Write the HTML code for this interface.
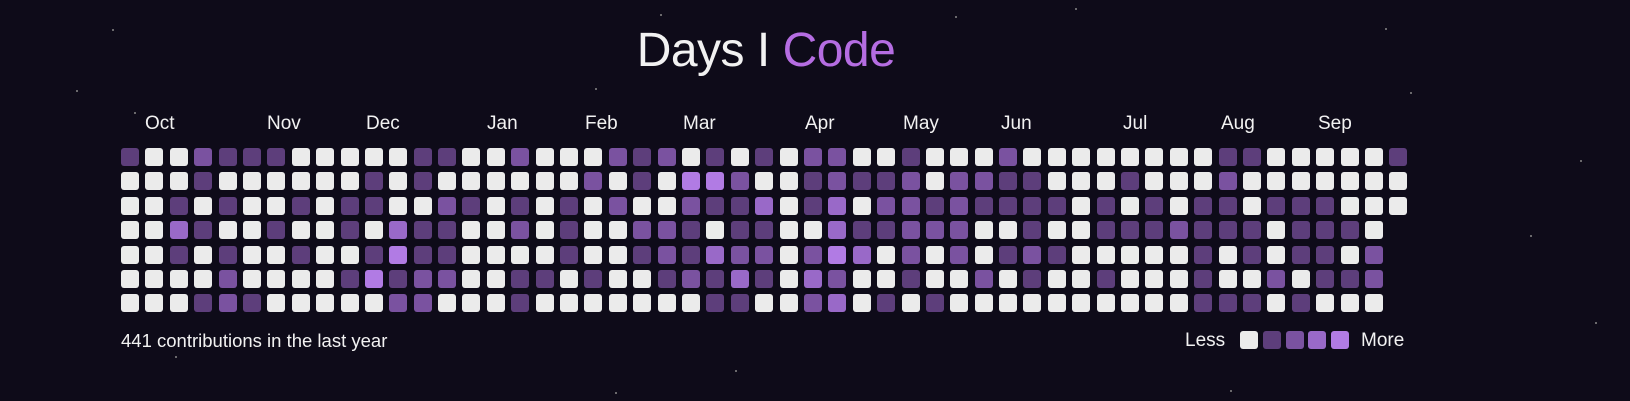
<!DOCTYPE html>
<html><head><meta charset="utf-8"><style>
*{margin:0;padding:0;box-sizing:border-box}
html,body{width:1630px;height:401px;overflow:hidden;background:#0e0b19;font-family:"Liberation Sans",sans-serif;color:#f2f2f2}
.t{position:absolute;top:23px;left:0;width:1532px;text-align:center;font-size:48px;letter-spacing:-0.5px}
.t span{color:#b56de2}
.m{position:absolute;top:113px;font-size:19px}
.g{position:absolute;left:121px;top:148px;display:grid;grid-template-rows:repeat(7,18px);grid-auto-flow:column;grid-auto-columns:18px;gap:6.4px}
.g i,.l i{display:block;width:18px;height:18px;border-radius:3px;background:#ebebeb}
.g i.a,.l i.a{background:#5d3e7b}.g i.b,.l i.b{background:#7a52a0}.g i.c,.l i.c{background:#9969c8}.g i.d,.l i.d{background:#b17be4}
.f{position:absolute;left:121px;top:330px;font-size:18.5px}
.l{position:absolute;left:1240px;top:331px;display:flex;gap:4.8px}
.s{position:absolute;width:2px;height:2px;border-radius:1px;background:#888}
</style></head><body>
<div class="t">Days I <span>Code</span></div>
<div class="m" style="left:145px">Oct</div>
<div class="m" style="left:267px">Nov</div>
<div class="m" style="left:366px">Dec</div>
<div class="m" style="left:487px">Jan</div>
<div class="m" style="left:585px">Feb</div>
<div class="m" style="left:683px">Mar</div>
<div class="m" style="left:805px">Apr</div>
<div class="m" style="left:903px">May</div>
<div class="m" style="left:1001px">Jun</div>
<div class="m" style="left:1123px">Jul</div>
<div class="m" style="left:1221px">Aug</div>
<div class="m" style="left:1318px">Sep</div>
<div class="g">
<i class=a></i><i></i><i></i><i></i><i></i><i></i><i></i>
<i></i><i></i><i></i><i></i><i></i><i></i><i></i>
<i></i><i></i><i class=a></i><i class=c></i><i class=a></i><i></i><i></i>
<i class=b></i><i class=a></i><i></i><i class=a></i><i></i><i></i><i class=a></i>
<i class=a></i><i></i><i class=a></i><i></i><i class=a></i><i class=b></i><i class=b></i>
<i class=a></i><i></i><i></i><i></i><i></i><i></i><i class=a></i>
<i class=a></i><i></i><i></i><i class=a></i><i></i><i></i><i></i>
<i></i><i></i><i class=a></i><i></i><i class=a></i><i></i><i></i>
<i></i><i></i><i></i><i></i><i></i><i></i><i></i>
<i></i><i></i><i class=a></i><i class=a></i><i></i><i class=a></i><i></i>
<i></i><i class=a></i><i class=a></i><i></i><i class=a></i><i class=d></i><i></i>
<i></i><i></i><i></i><i class=c></i><i class=d></i><i class=a></i><i class=b></i>
<i class=a></i><i class=a></i><i></i><i class=a></i><i class=a></i><i class=b></i><i class=b></i>
<i class=a></i><i></i><i class=b></i><i class=a></i><i class=a></i><i class=b></i><i></i>
<i></i><i></i><i class=a></i><i></i><i></i><i></i><i></i>
<i></i><i></i><i></i><i></i><i></i><i></i><i></i>
<i class=b></i><i></i><i class=a></i><i class=b></i><i></i><i class=a></i><i class=a></i>
<i></i><i></i><i></i><i></i><i></i><i class=a></i><i></i>
<i></i><i></i><i class=a></i><i class=a></i><i class=a></i><i></i><i></i>
<i></i><i class=b></i><i></i><i></i><i></i><i class=a></i><i></i>
<i class=b></i><i></i><i class=b></i><i></i><i></i><i></i><i></i>
<i class=a></i><i class=a></i><i></i><i class=b></i><i class=a></i><i></i><i></i>
<i class=b></i><i></i><i></i><i class=b></i><i class=b></i><i class=a></i><i></i>
<i></i><i class=d></i><i class=b></i><i class=a></i><i class=a></i><i class=b></i><i></i>
<i class=a></i><i class=d></i><i class=a></i><i></i><i class=c></i><i class=a></i><i class=a></i>
<i></i><i class=b></i><i class=a></i><i class=a></i><i class=b></i><i class=c></i><i class=a></i>
<i class=a></i><i></i><i class=c></i><i class=a></i><i class=b></i><i class=a></i><i></i>
<i></i><i></i><i></i><i></i><i></i><i></i><i></i>
<i class=b></i><i class=a></i><i class=a></i><i></i><i class=b></i><i class=c></i><i class=b></i>
<i class=b></i><i class=b></i><i class=c></i><i class=c></i><i class=d></i><i class=b></i><i class=c></i>
<i></i><i class=a></i><i></i><i class=a></i><i class=c></i><i></i><i></i>
<i></i><i class=a></i><i class=b></i><i class=a></i><i></i><i></i><i class=a></i>
<i class=a></i><i class=b></i><i class=b></i><i class=b></i><i class=b></i><i class=a></i><i></i>
<i></i><i></i><i class=a></i><i class=b></i><i></i><i></i><i class=a></i>
<i></i><i class=b></i><i class=b></i><i class=b></i><i class=b></i><i></i><i></i>
<i></i><i class=b></i><i class=a></i><i></i><i></i><i class=b></i><i></i>
<i class=b></i><i class=a></i><i class=a></i><i></i><i class=a></i><i></i><i></i>
<i></i><i class=a></i><i class=a></i><i class=a></i><i class=b></i><i class=a></i><i></i>
<i></i><i></i><i class=a></i><i></i><i class=a></i><i></i><i></i>
<i></i><i></i><i></i><i></i><i></i><i></i><i></i>
<i></i><i></i><i class=a></i><i class=a></i><i></i><i class=a></i><i></i>
<i></i><i class=a></i><i></i><i class=a></i><i></i><i></i><i></i>
<i></i><i></i><i class=a></i><i class=a></i><i></i><i></i><i></i>
<i></i><i></i><i></i><i class=b></i><i></i><i></i><i></i>
<i></i><i></i><i class=a></i><i class=a></i><i class=a></i><i class=a></i><i class=a></i>
<i class=a></i><i class=b></i><i class=a></i><i class=a></i><i></i><i></i><i class=a></i>
<i class=a></i><i></i><i></i><i class=a></i><i class=a></i><i></i><i class=a></i>
<i></i><i></i><i class=a></i><i></i><i></i><i class=b></i><i></i>
<i></i><i></i><i class=a></i><i class=a></i><i class=a></i><i></i><i class=a></i>
<i></i><i></i><i class=a></i><i class=a></i><i class=a></i><i class=a></i><i></i>
<i></i><i></i><i></i><i class=a></i><i></i><i class=a></i><i></i>
<i></i><i></i><i></i><i></i><i class=b></i><i class=b></i><i></i>
<i class=a></i><i></i><i></i>
</div>
<div class="f">441 contributions in the last year</div>
<div class="m" style="left:1185px;top:330px">Less</div>
<div class="l"><i></i><i class=a></i><i class=b></i><i class=c></i><i class=d></i></div>
<div class="m" style="left:1361px;top:330px">More</div>
<div class="s" style="left:76px;top:90px"></div>
<div class="s" style="left:112px;top:29px"></div>
<div class="s" style="left:134px;top:112px"></div>
<div class="s" style="left:175px;top:356px"></div>
<div class="s" style="left:595px;top:88px"></div>
<div class="s" style="left:660px;top:14px"></div>
<div class="s" style="left:955px;top:16px"></div>
<div class="s" style="left:1385px;top:28px"></div>
<div class="s" style="left:1410px;top:92px"></div>
<div class="s" style="left:1580px;top:160px"></div>
<div class="s" style="left:1595px;top:322px"></div>
<div class="s" style="left:1075px;top:8px"></div>
<div class="s" style="left:735px;top:370px"></div>
<div class="s" style="left:615px;top:392px"></div>
<div class="s" style="left:1230px;top:390px"></div>
<div class="s" style="left:1530px;top:235px"></div>
</body></html>
